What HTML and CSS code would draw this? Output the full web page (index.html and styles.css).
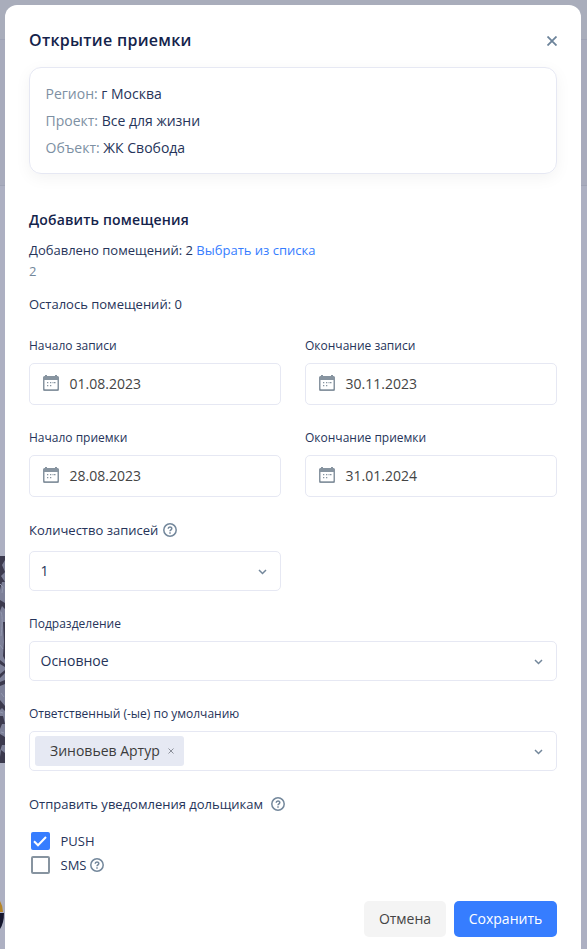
FILE: index.html
```html
<!DOCTYPE html>
<html lang="ru">
<head>
<meta charset="utf-8">
<meta name="viewport" content="width=device-width, initial-scale=1">
<title>Открытие приемки</title>
<link rel="stylesheet" href="styles.css">
</head>
<body>

<!-- page behind the modal -->
<svg class="backdrop" width="587" height="949" viewBox="0 0 587 949">
  <path fill="#a9adbb" d="M0 0h587v39H0z"/>
  <path fill="#a8abbc" d="M0 40h587v145H0z"/>
  <path stroke="#9fa3b5" d="M0 39.5h587M0 185.5h587"/>
  <path fill="#7d8098" d="M0 556h5v207H0z"/>
  <path fill="#3c3a4e" d="M0 556h5v4l-3 5 3 7-4 4 4 6H2l-2 8zM0 600l5 3v6l-3-3-2 5zM3 622h2v38l-2-4 1-14zM0 660l5 4v3l-5-3zM0 674l5-4v3l-5 5zM0 682l5-2v4l-5 2zM0 700l5 6v5l-3-3-2 2zM0 716h3l2 8H2l-2 5zM0 734l5 3v8H2l-2 6zM1 750l4 3v10H0v-6z"/>
  <path stroke="#9297ae" fill="none" d="M0 584l3 3-1 6M1 612c2 5 1 16 0 24M0 645l3 4M1 693l3 4M0 712l3 1M1 732l3 1"/>
  <path fill="#b68529" d="M0 901q3 5 3 11H0z"/>
  <path fill="#15162d" d="M0 913h4q0 10-4 16z"/>
</svg>

<!-- shared icons -->
<svg class="sprite">
  <symbol id="calendar" viewBox="0 0 16 16">
    <path fill="#8794a0" fill-rule="evenodd" d="M2 0h2v1h8V0h2v1h.5A1.5 1.5 0 0 1 16 2.500v12a1.500 1.500 0 0 1-1.500 1.500h-13A1.500 1.500 0 0 1 0 14.500v-12A1.500 1.500 0 0 1 1.500 1H2zM1.500 5v8.500a.8.800 0 0 0 .8.800h11.400a.8.800 0 0 0 .8-.8V5z"/>
    <path fill="#8794a0" d="M4 7h1.300v1.300H4zM7 7h1.300v1.300H7zM9.500 7h1v1.300h-1zM11 7h1.500v1.300H11zM4 10h1.300v1.300H4zM7 10h1.300v1.300H7z"/>
  </symbol>
  <symbol id="help" viewBox="0 0 14 14">
    <circle cx="7" cy="7" r="6.200" fill="none" stroke="#73879b" stroke-width="1.500"/>
    <path fill="none" stroke="#73879b" stroke-width="1.500" d="M5.200 5.700C5.200 3.500 8.800 3.500 8.800 5.500 8.800 6.800 7 6.800 7 8.300"/>
    <path fill="#73879b" d="M6.250 9.200h1.500v1.500h-1.500z"/>
  </symbol>
  <symbol id="arrow" viewBox="0 0 9 6">
    <path fill="none" stroke="#73879b" stroke-width="1.500" d="M1 1l3.500 3.500L8 1"/>
  </symbol>
</svg>

<div class="modal">
  <div class="modal-header">
    <h2>Открытие приемки</h2>
    <svg class="close" viewBox="0 0 10 10"><path d="M.5.5l9 9M9.500.5l-9 9"/></svg>
  </div>

  <div class="info">
    <div><span>Регион:</span> г Москва</div>
    <div><span>Проект:</span> Все для жизни</div>
    <div><span>Объект:</span> ЖК Свобода</div>
  </div>

  <h3>Добавить помещения</h3>
  <p class="added">Добавлено помещений: 2 <a href="#">Выбрать из списка</a></p>
  <p class="count">2</p>
  <p class="left">Осталось помещений: 0</p>

  <div class="dates">
    <div>
      <label>Начало записи</label>
      <div class="date"><svg><use href="#calendar"/></svg>01.08.2023</div>
    </div>
    <div>
      <label>Окончание записи</label>
      <div class="date"><svg><use href="#calendar"/></svg>30.11.2023</div>
    </div>
    <div>
      <label>Начало приемки</label>
      <div class="date"><svg><use href="#calendar"/></svg>28.08.2023</div>
    </div>
    <div>
      <label>Окончание приемки</label>
      <div class="date"><svg><use href="#calendar"/></svg>31.01.2024</div>
    </div>
  </div>

  <div class="field half">
    <label class="big">Количество записей <svg class="help"><use href="#help"/></svg></label>
    <div class="select">1<svg class="arrow"><use href="#arrow"/></svg></div>
  </div>

  <div class="field">
    <label>Подразделение</label>
    <div class="select">Основное<svg class="arrow"><use href="#arrow"/></svg></div>
  </div>

  <div class="field">
    <label>Ответственный (-ые) по умолчанию</label>
    <div class="select multi">
      <span class="tag">Зиновьев Артур<svg viewBox="0 0 6 6"><path d="M.5.5l5 5M5.500.5l-5 5"/></svg></span>
      <svg class="arrow"><use href="#arrow"/></svg>
    </div>
  </div>

  <div class="notify">Отправить уведомления дольщикам <svg class="help"><use href="#help"/></svg></div>
  <div class="check">
    <span class="box checked"><svg viewBox="0 0 18 18"><path d="M3 9.300l4 4 8-8.300"/></svg></span>PUSH
  </div>
  <div class="check">
    <span class="box"></span>SMS<svg class="help"><use href="#help"/></svg>
  </div>

  <div class="buttons">
    <button class="cancel">Отмена</button>
    <button class="save">Сохранить</button>
  </div>
</div>

</body>
</html>
```
FILE: styles.css
```css
* {
  box-sizing: border-box;
}

body {
  margin: 0;
  height: 949px;
  padding: 5px 6px 0 5px;
  overflow: hidden;
  background: #adb0c2;
  font-family: 'Open Sans', sans-serif;
  font-size: 13px;
  color: #26345a;
}

h2, h3, p {
  margin: 0;
}

h2, h3 {
  color: #14234b;
}

svg {
  display: block;
  flex: none;
}

/* Dimmed page under the modal */
.backdrop {
  position: absolute;
  top: 0;
  left: 0;
  z-index: -1;
}

.sprite {
  position: absolute;
  width: 0;
  height: 0;
}

.modal {
  height: 944px;
  padding: 20px 24px 0;
  background: #fff;
  border-radius: 12px 12px 0 0;
}

.modal-header {
  display: flex;
  align-items: center;
  justify-content: space-between;
  height: 30px;
  margin-bottom: 12px;
}

h2 {
  font-size: 16px;
  font-weight: 600;
  letter-spacing: 0.3px;
  line-height: 30px;
}

.close {
  width: 10px;
  height: 10px;
  margin-top: 2px;
}

.close path {
  stroke: #6c839a;
  stroke-width: 1.8;
}

/* Object info */
.info {
  height: 107px;
  padding: 12px 15.5px;
  border: 1px solid #e6e8f3;
  border-radius: 12px;
  box-shadow: 0 4px 16px rgba(0, 0, 0, 0.05);
  font-size: 14px;
  line-height: 27px;
}

.info span {
  color: #7d90a3;
}

/* Rooms */
h3 {
  margin-top: 35px;
  font-size: 14px;
  font-weight: 600;
  letter-spacing: 0.17px;
  line-height: 22px;
}

.added {
  margin-top: 9px;
  line-height: 21px;
}

.added a {
  color: #367dff;
  text-decoration: none;
}

.count {
  color: #73879b;
  line-height: 21px;
}

.left {
  margin-top: 12px;
  line-height: 21px;
}

/* Fields */
label {
  display: flex;
  align-items: center;
  height: 18px;
  margin-bottom: 9px;
  font-size: 12px;
}

label.big {
  height: 20px;
  margin-bottom: 11px;
  font-size: 13px;
}

.dates {
  display: grid;
  grid-template-columns: 1fr 1fr;
  gap: 23px 24px;
  margin-top: 21px;
}

.date,
.select {
  display: flex;
  align-items: center;
  border: 1px solid #e6e8f3;
  border-radius: 5px;
  font-size: 14px;
}

.date {
  height: 42px;
  padding: 0 0 2px 13px;
  color: #444;
}

.date svg {
  width: 16px;
  height: 16px;
  margin: -1px 10.5px 0 0;
}

.field {
  margin-top: 23px;
}

.half {
  width: 252px;
}

.select {
  justify-content: space-between;
  height: 40px;
  padding: 0 13px 2px 10.5px;
}

.multi {
  padding: 0 13px 0 5px;
}

.arrow {
  width: 9px;
  height: 6px;
  margin-top: 3px;
}

.multi .arrow {
  margin-top: 1px;
}

.tag {
  display: flex;
  align-items: center;
  height: 30px;
  padding: 0 10px 2px 15px;
  border-radius: 3px;
  background: #e6e9f3;
  color: #3c3c3c;
}

.tag svg {
  width: 6px;
  height: 6px;
  margin: 2px 0 0 8px;
}

.tag path {
  stroke: #8b8f99;
}

.help {
  width: 14px;
  height: 14px;
  margin-left: 4.5px;
}

/* Notifications */
.notify {
  display: flex;
  align-items: center;
  height: 20px;
  margin: 23px 0 15px;
}

.notify .help {
  margin-left: 7.5px;
}

.check {
  display: flex;
  align-items: center;
  height: 24px;
  padding-left: 2px;
}

.check .help {
  margin-left: 4px;
}

.box {
  width: 19px;
  height: 18px;
  margin-right: 10.5px;
  border: 2px solid #8794a0;
  border-radius: 2px;
}

.box.checked {
  border: 0;
  background: #367dff;
}

.box svg {
  width: 18px;
  height: 18px;
}

.box path {
  fill: none;
  stroke: #fff;
  stroke-width: 2;
}

/* Buttons */
.buttons {
  display: flex;
  justify-content: flex-end;
  gap: 8px;
  margin-top: 24px;
}

button {
  width: 82px;
  height: 36px;
  padding: 0 0 2px;
  border: 0;
  border-radius: 5px;
  font-family: inherit;
  font-size: 14px;
  cursor: pointer;
}

.cancel {
  background: #f4f4f4;
  color: #444;
}

.save {
  width: 103px;
  background: #367dff;
  color: #fff;
}
```
